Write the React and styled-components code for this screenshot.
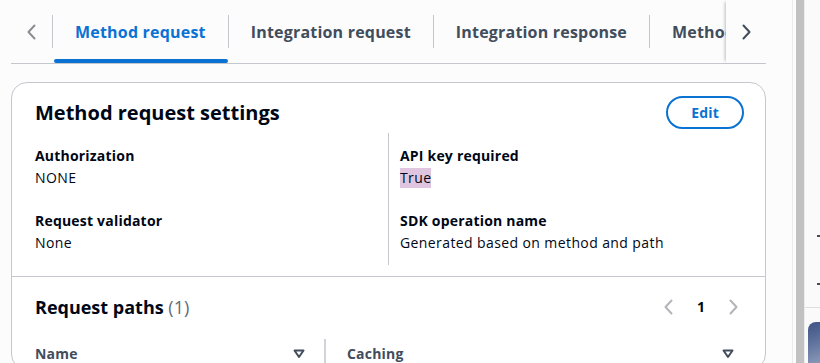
import React from 'react';
import styled, { createGlobalStyle } from 'styled-components';

const GlobalStyle = createGlobalStyle`
  html, body {
    margin: 0;
    padding: 0;
    background: #fcfcfc;
  }
  body {
    font-family: 'Open Sans', 'Noto Sans', sans-serif;
    font-size: 14px;
    line-height: 20px;
    color: #000716;
    -webkit-font-smoothing: antialiased;
  }
`;

const Page = styled.div`
  display: flex;
  height: 363px;
  overflow: hidden;
`;

const Main = styled.main`
  width: 793px;
  padding: 0 26px 0 11px;
  border-right: 1px solid #e9ebed;
  box-sizing: border-box;
  flex-shrink: 0;
`;

const Scrollbar = styled.div`
  width: 8px;
  margin-left: 3px;
  background: #c1c1c1;
  flex-shrink: 0;
`;

const SidePanel = styled.aside`
  flex: 1;
  display: flex;
  flex-direction: column;
  background: #fafafa;
  border-left: 1px solid #ececec;
`;

const SideMark = styled.div`
  height: 2px;
  width: 3px;
  margin: ${(p) => p.$top}px 0 0 auto;
  background: #414d5c;
`;

const SideRule = styled.div`
  margin-top: ${(p) => p.$top}px;
  height: 1px;
  background: #dedede;
`;

const SideImage = styled.div`
  margin: 14px 0 0 3px;
  flex: 1;
  border-top-left-radius: 8px;
  background: linear-gradient(160deg, #3f5487 0%, #5c6f9a 45%, #8a98b8 100%);
`;

const TabHeader = styled.div`
  display: flex;
  height: 64px;
  border-bottom: 1px solid #c6c6cd;
  box-sizing: border-box;
`;

const ArrowButton = styled.button`
  display: flex;
  align-items: center;
  justify-content: center;
  width: ${(p) => p.$width}px;
  flex-shrink: 0;
  padding: 0;
  border: none;
  background: transparent;
  color: ${(p) => (p.$disabled ? '#8c8c94' : '#414d5c')};
  cursor: pointer;
  position: relative;
  z-index: 1;
  box-shadow: ${(p) => (p.$shadow ? '-3px 0 3px -2px rgba(0, 7, 22, 0.25)' : 'none')};
`;

const TabList = styled.div`
  display: flex;
  flex: 1;
  overflow: hidden;
  min-width: 0;
`;

const Tab = styled.div`
  position: relative;
  display: flex;
  align-items: center;
  padding: 0 22px 0 23px;
  flex-shrink: 0;
  font-size: 16px;
  font-weight: 700;
  letter-spacing: 0.2px;
  white-space: nowrap;
  color: ${(p) => (p.$active ? '#0972d3' : '#414d5c')};

  &::before {
    content: '';
    position: absolute;
    left: 0;
    top: 15px;
    height: 33px;
    width: 1px;
    background: #c6c6cd;
  }

  &::after {
    content: '';
    display: ${(p) => (p.$active ? 'block' : 'none')};
    position: absolute;
    left: 2px;
    right: 0;
    bottom: 0;
    height: 4px;
    border-radius: 2px;
    background: #0972d3;
  }
`;

const Card = styled.section`
  margin-top: 18px;
  background: #ffffff;
  border: 1px solid #c6c6cd;
  border-radius: 16px;
  overflow: hidden;
`;

const CardHeader = styled.div`
  display: flex;
  align-items: center;
  justify-content: space-between;
  padding: 13px 21px 0 23px;
`;

const Heading = styled.h2`
  margin: 0;
  font-size: ${(p) => (p.$large ? '20px' : '18px')};
  line-height: ${(p) => (p.$large ? '24px' : '22px')};
  font-weight: 700;
  color: #000716;
`;

const Counter = styled.span`
  font-weight: 400;
  color: #5f6b7a;
`;

const EditButton = styled.button`
  height: 33px;
  padding: 0 23px;
  border: 2px solid #0972d3;
  border-radius: 20px;
  background: #ffffff;
  color: #0972d3;
  font-family: inherit;
  font-size: 14px;
  font-weight: 700;
  line-height: 20px;
  letter-spacing: 0.2px;
  cursor: pointer;
`;

const Settings = styled.div`
  display: grid;
  grid-template-columns: 353px 1fr;
  margin: 4px 21px 0 23px;
  padding-bottom: 11px;
`;

const Column = styled.div`
  display: flex;
  flex-direction: column;
  gap: 23px;
  padding: 13px 0 12px ${(p) => (p.$divided ? '11px' : '0')};
  border-left: ${(p) => (p.$divided ? '1px solid #c6c6cd' : 'none')};
`;

const Field = styled.div`
  display: flex;
  flex-direction: column;
  align-items: flex-start;
`;

const Label = styled.div`
  font-weight: 700;
  letter-spacing: 0.2px;
  margin-bottom: 2px;
`;

const Value = styled.div`
  letter-spacing: 0.4px;
  background: ${(p) => (p.$highlight ? '#dfc5df' : 'transparent')};
`;

const Section = styled.div`
  border-top: 1px solid #c6c6cd;
  padding: 19px 21px 0 23px;
`;

const SectionHeader = styled.div`
  display: flex;
  align-items: center;
  justify-content: space-between;
`;

const Pagination = styled.div`
  display: flex;
  align-items: center;
  gap: 14px;
  margin-right: 3px;
  color: #b4b4bb;
`;

const PageNumber = styled.span`
  font-weight: 700;
  color: #000716;
  padding: 0 6px;
`;

const TableHead = styled.div`
  display: grid;
  grid-template-columns: 289px 1fr;
  margin-top: 21px;
`;

const HeadCell = styled.div`
  display: flex;
  align-items: center;
  justify-content: space-between;
  height: 30px;
  padding: ${(p) => (p.$first ? '0 19px 0 0' : '0 10px 0 21px')};
  border-left: ${(p) => (p.$first ? 'none' : '2px solid #d1d5db')};
  font-weight: 700;
  letter-spacing: 0.2px;
  color: #414d5c;
  align-self: start;
`;

const Chevron = ({ dir }) => (
  <svg width="16" height="16" viewBox="0 0 16 16" fill="none">
    <path
      d={dir === 'left' ? 'M10.5 1.5 4.5 8l6 6.5' : 'M5.5 1.5 11.5 8l-6 6.5'}
      stroke="currentColor"
      strokeWidth="2"
      strokeLinecap="round"
      strokeLinejoin="round"
    />
  </svg>
);

const SortIcon = () => (
  <svg width="12" height="10" viewBox="0 0 12 10" fill="none">
    <path d="M1.5 1.5h9L6 8z" stroke="#414d5c" strokeWidth="2" strokeLinejoin="round" />
  </svg>
);

const tabs = ['Method request', 'Integration request', 'Integration response', 'Method response'];

const App = () => {
  return (
    <>
      <GlobalStyle />
      <Page>
        <Main>
          <TabHeader>
            <ArrowButton $width={41} $disabled aria-label="Scroll left">
              <Chevron dir="left" />
            </ArrowButton>
            <TabList>
              {tabs.map((t, i) => (
                <Tab key={t} $active={i === 0}>
                  {t}
                </Tab>
              ))}
            </TabList>
            <ArrowButton $width={40} $shadow aria-label="Scroll right">
              <Chevron dir="right" />
            </ArrowButton>
          </TabHeader>

          <Card>
            <CardHeader>
              <Heading $large>Method request settings</Heading>
              <EditButton>Edit</EditButton>
            </CardHeader>
            <Settings>
              <Column>
                <Field>
                  <Label>Authorization</Label>
                  <Value>NONE</Value>
                </Field>
                <Field>
                  <Label>Request validator</Label>
                  <Value>None</Value>
                </Field>
              </Column>
              <Column $divided>
                <Field>
                  <Label>API key required</Label>
                  <Value $highlight>True</Value>
                </Field>
                <Field>
                  <Label>SDK operation name</Label>
                  <Value>Generated based on method and path</Value>
                </Field>
              </Column>
            </Settings>

            <Section>
              <SectionHeader>
                <Heading>
                  Request paths <Counter>(1)</Counter>
                </Heading>
                <Pagination>
                  <Chevron dir="left" />
                  <PageNumber>1</PageNumber>
                  <Chevron dir="right" />
                </Pagination>
              </SectionHeader>
              <TableHead>
                <HeadCell $first>
                  Name
                  <SortIcon />
                </HeadCell>
                <HeadCell>
                  Caching
                  <SortIcon />
                </HeadCell>
              </TableHead>
            </Section>
          </Card>
        </Main>
        <Scrollbar />
        <SidePanel>
          <SideMark $top={235} />
          <SideMark $top={46} />
          <SideRule $top={22} />
          <SideImage />
        </SidePanel>
      </Page>
    </>
  );
};

export default App;
